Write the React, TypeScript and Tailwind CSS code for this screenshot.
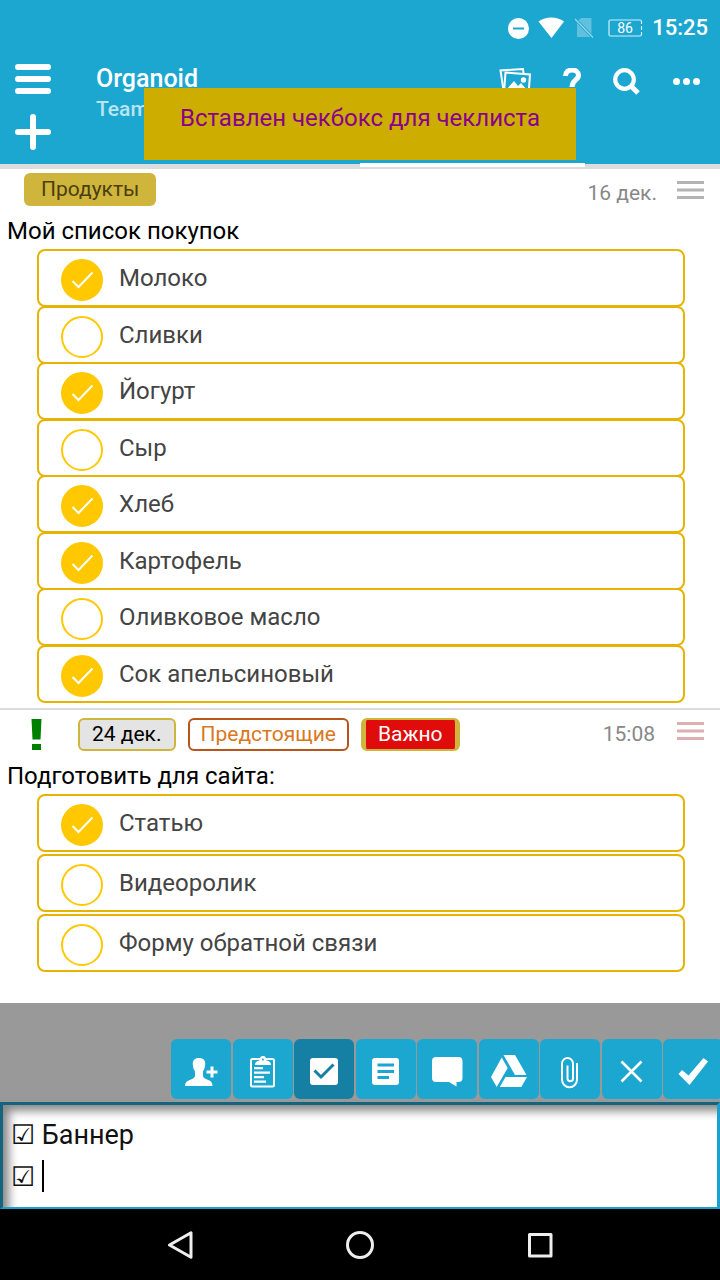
import React, { useState } from 'react'

type Item = { id: number; text: string; done: boolean }

const groceries: Item[] = [
  { id: 1, text: 'Молоко', done: true },
  { id: 2, text: 'Сливки', done: false },
  { id: 3, text: 'Йогурт', done: true },
  { id: 4, text: 'Сыр', done: false },
  { id: 5, text: 'Хлеб', done: true },
  { id: 6, text: 'Картофель', done: true },
  { id: 7, text: 'Оливковое масло', done: false },
  { id: 8, text: 'Сок апельсиновый', done: true },
]

const siteTasks: Item[] = [
  { id: 11, text: 'Статью', done: true },
  { id: 12, text: 'Видеоролик', done: false },
  { id: 13, text: 'Форму обратной связи', done: false },
]

const tools = [
  {
    label: 'Добавить участника',
    icon: (
      <g fill="#fff">
        <path d="M28 19c4.500 0 6.500 2.500 6.200 6.500-.2 3-1 5.200-2.200 7v4.300c0 1.700 1.500 2.700 4 3.700 3.500 1.300 5.500 2.500 5.500 6.500H14c0-4 2.500-5.200 6-6.500 2.500-1 4-2 4-3.700v-4.300c-1.200-1.800-2-4-2.200-7C21.500 21.500 23.500 19 28 19z" />
        <path d="M39.500 27.500h3v4h4v3h-4v4h-3v-4h-4v-3h4z" />
      </g>
    ),
  },
  {
    label: 'Шаблон',
    icon: (
      <g fill="none" stroke="#fff">
        <rect x="18" y="20" width="23" height="27.500" rx="1.500" strokeWidth="2" />
        <path d="M22 26c0-3 2-4 4.500-4.500 0-2.500 1-4.500 3.500-4.500s3.500 2 3.500 4.500C36 22 38 23 38 26z" fill="#fff" stroke="none" />
        <circle cx="30" cy="20.500" r="1" fill="#1ca7d1" stroke="none" />
        <path d="M21 29.200h9M21 33.700h16M21 38.200h10M21 42.700h12" strokeWidth="2.200" />
      </g>
    ),
  },
  {
    label: 'Чекбокс',
    active: true,
    icon: (
      <>
        <rect x="16" y="19" width="28" height="27" rx="3" fill="#fff" />
        <path d="M20.500 31.500l6.500 6.500 12.500-12.500" fill="none" stroke="#1580a3" strokeWidth="3" />
      </>
    ),
  },
  {
    label: 'Заметка',
    icon: (
      <>
        <rect x="16" y="19" width="27" height="27" rx="3" fill="#fff" />
        <path d="M21.500 26H38M21.500 32.500H38M21.500 38.500H33" stroke="#1ca7d1" strokeWidth="3" />
      </>
    ),
  },
  {
    label: 'Комментарий',
    icon: <path d="M19 18h22.500a4 4 0 0 1 4 4v17a4 4 0 0 1-4 4H39.500v4.500L32 43H19a4 4 0 0 1-4-4V22a4 4 0 0 1 4-4z" fill="#fff" />,
  },
  {
    label: 'Google Диск',
    icon: (
      <g fill="#fff">
        <path d="M24.500 16H36l11.500 20H36z" />
        <path d="M22.700 18.500l6 10.500L17.700 48 12 38z" />
        <path d="M26.500 38H48l-5.700 10H20.800z" />
      </g>
    ),
  },
  {
    label: 'Прикрепить файл',
    icon: (
      <path
        d="M37 24v16.500a7.500 7.800 0 0 1-15 0V24.500a5.500 5.500 0 0 1 11 0V39.500a2.750 2.750 0 0 1-5.500 0V26.500"
        fill="none"
        stroke="#fff"
        strokeWidth="2"
      />
    ),
  },
  {
    label: 'Отмена',
    icon: <path d="M19.500 22.500l20 20M39.500 22.500l-20 20" stroke="#fff" strokeWidth="2.600" />,
  },
  {
    label: 'Сохранить',
    icon: <path d="M15.500 35l3.500-4 6.500 5.500L40.500 19l4.500 3.500L26.500 46z" fill="#fff" />,
  },
]

const CheckRow = ({ item, className }: { item: Item; className?: string }) => {
  const [checked, setChecked] = useState(item.done)
  return (
    <li className={className}>
      <label className="flex items-start gap-4 rounded-lg border-2 border-[#e6b400] bg-white pt-2 pb-1 pl-[22px]">
        <span className="grid shrink-0">
          <input
            type="checkbox"
            checked={checked}
            onChange={() => setChecked(!checked)}
            className="col-start-1 row-start-1 size-[42px] appearance-none rounded-full border-2 border-[#ffc800] checked:bg-[#ffc800]"
          />
          {checked && (
            <svg className="pointer-events-none col-start-1 row-start-1 size-[42px]" viewBox="0 0 42 42" fill="none">
              <path d="M11.500 22l6 6L31.500 13.500" stroke="#fff" strokeWidth="2" />
            </svg>
          )}
        </span>
        <span className="text-2xl leading-[38px] text-[#444]">{item.text}</span>
      </label>
    </li>
  )
}

const NoteMenu = ({ className }: { className: string }) => (
  <button type="button" aria-label="Меню заметки" className={className}>
    <svg className="h-[18px] w-[27px]" viewBox="0 0 27 18" stroke="currentColor" strokeWidth="3">
      <path d="M0 1.500h27M0 9h27M0 16.500h27" />
    </svg>
  </button>
)

const StatusBar = () => (
  <div className="flex h-14 items-center justify-end pr-3 text-white">
    <svg className="h-6 w-[138px]" viewBox="0 0 138 24">
      <circle cx="10.500" cy="12.500" r="10.500" fill="#fff" />
      <path d="M5 12.500h11" stroke="#1ca7d1" strokeWidth="2" />
      <path d="M30.500 5.500C38 .2 48.500 .2 56 5.500L43.500 22z" fill="#fff" />
      <path d="M73 2h10.500v19h-14.500V6z" fill="#fff" opacity=".3" />
      <path d="M67 3l18 18.500" stroke="#1ca7d1" strokeWidth="3" />
      <path d="M67 3l18 18.500" stroke="#fff" strokeWidth="1.200" opacity=".55" />
      <path d="M133.500 8V5.500a1.500 1.500 0 0 0-1.500-1.500h-29.500a1.500 1.500 0 0 0-1.500 1.500v13a1.500 1.500 0 0 0 1.500 1.500H132a1.500 1.500 0 0 0 1.500-1.500V16M133.500 10v4" fill="none" stroke="#fff" strokeWidth="1.200" opacity=".8" />
      <text x="117" y="17" textAnchor="middle" fill="#fff" fontSize="14" fontFamily="Roboto, sans-serif">86</text>
    </svg>
    <span className="ml-1.5 text-[22px] leading-6 font-medium">15:25</span>
  </div>
)

export default function App() {
  const [draft, setDraft] = useState('☑ Баннер\n☑ ')

  return (
    <div className="relative flex min-h-screen flex-col overflow-hidden bg-white font-[Roboto,sans-serif]">
      <header className="border-b-[5px] border-[#dcdcdc] bg-[#1ca7d1]">
        <StatusBar />
        <div className="flex pt-2 pl-[15px] text-white">
          <div className="flex flex-col gap-5">
            <button type="button" aria-label="Меню">
              <svg className="h-[30px] w-9" viewBox="0 0 36 30" stroke="#fff" strokeWidth="6" strokeLinecap="round">
                <path d="M3 3h30M3 15h30M3 27h30" />
              </svg>
            </button>
            <button type="button" aria-label="Добавить">
              <svg className="size-9" viewBox="0 0 36 36" stroke="#fff" strokeWidth="6" strokeLinecap="round">
                <path d="M3 18h30M18 3v30" />
              </svg>
            </button>
          </div>
          <div className="ml-[45px] flex-1">
            <h1 className="text-[25px] leading-[30px] font-medium">Organoid</h1>
            <p className="text-[21px] leading-[30px] font-medium opacity-70">Team</p>
          </div>
          <div className="flex items-start gap-8 pt-1 pr-5">
            <button type="button" aria-label="Галерея">
              <svg className="h-7 w-8" viewBox="0 0 32 28" fill="none">
                <path d="M4.500 22L1.500 2.500 24 1l.5 4" stroke="#fff" strokeWidth="2" />
                <path d="M6.500 4.500l24.500 2-1.500 20-24.500-1.500z" stroke="#fff" strokeWidth="2" />
                <path d="M8 21l7-8 4 5 3-3 6 7v3L7 24z" fill="#fff" />
                <circle cx="24.500" cy="12" r="2.700" fill="#fff" />
              </svg>
            </button>
            <button type="button" aria-label="Помощь">
              <svg className="h-7 w-[18px]" viewBox="0 0 18 28" fill="none">
                <path d="M2.500 8c0-4 2.800-6 6.500-6s6.500 2 6.500 5.200c0 5-6.500 4.800-6.500 11.800" stroke="#fff" strokeWidth="5" />
                <path d="M6.500 22h5v5h-5z" fill="#fff" />
              </svg>
            </button>
            <button type="button" aria-label="Поиск">
              <svg className="size-7" viewBox="0 0 28 28" fill="none" stroke="#fff">
                <circle cx="11.500" cy="11.500" r="9.300" strokeWidth="4.200" />
                <path d="M17.500 17.500l7.500 7.500" strokeWidth="5" />
              </svg>
            </button>
            <button type="button" aria-label="Ещё">
              <svg className="h-7 w-[27px]" viewBox="0 0 27 28" fill="#fff">
                <circle cx="3.500" cy="13.500" r="3.500" />
                <circle cx="13.500" cy="13.500" r="3.500" />
                <circle cx="23.500" cy="13.500" r="3.500" />
              </svg>
            </button>
          </div>
        </div>
        {/* active tab line, hangs over the bottom border */}
        <div className="mt-[13px] -mb-[3px] ml-[50%] h-1 w-[225px] bg-white" />
      </header>

      <div role="status" className="absolute top-[88px] left-1/5 h-[72px] w-3/5 bg-[#ccad00] pt-3 text-center text-2xl leading-9 text-[#8b008b]">
        Вставлен чекбокс для чеклиста
      </div>

      <main className="flex-1">
        <article className="pb-[5px]">
          <div className="flex items-start pt-1 pr-4 pl-6">
            <span className="rounded-md bg-[#cfb53b] px-[17px] text-[21px] leading-[33px] text-[#4b3e10]">Продукты</span>
            <time className="ml-auto pt-1 text-[21px] leading-8 text-[#888]">16 дек.</time>
            <NoteMenu className="ml-5 pt-2 text-[#b4b4b4]" />
          </div>
          <h2 className="mt-1 pl-[7px] text-2xl leading-9 text-black">Мой список покупок</h2>
          <ul className="pr-[35px] pl-[37px]">
            {groceries.map((item) => (
              <CheckRow key={item.id} item={item} className="not-first:odd:-mt-0.5 even:-mt-px" />
            ))}
          </ul>
        </article>

        <article className="border-t-2 border-[#dcdcdc] pb-7">
          <div className="flex items-start pt-2 pr-4 pl-[31px]">
            <svg className="h-[33px] w-[11px]" viewBox="0 0 11 33" fill="#008000">
              <path d="M.5 1h10l-1 20.500h-8zM1 26h9v6H1z" />
            </svg>
            <div className="ml-9 flex gap-3 text-[21px] leading-[29px]">
              <span className="rounded-md border-2 border-[#cfb53b] bg-[#e4e4e4] px-3 text-black">24 дек.</span>
              <span className="rounded-md border-2 border-[#b8541c] px-[11px] text-[#d97820]">Предстоящие</span>
              <span className="rounded-md border-x-[5px] border-y-2 border-[#cfb53b] bg-[#e00b0b] px-3 text-white">Важно</span>
            </div>
            <time className="ml-auto text-[21px] leading-[33px] text-[#888]">15:08</time>
            <NoteMenu className="ml-[22px] pt-1 text-[#dcb0b0]" />
          </div>
          <h2 className="mt-[7px] pl-[7px] text-2xl leading-9 text-black">Подготовить для сайта:</h2>
          <ul className="flex flex-col gap-0.5 pr-[35px] pl-[37px]">
            {siteTasks.map((item) => (
              <CheckRow key={item.id} item={item} />
            ))}
          </ul>
        </article>
      </main>

      <footer>
        <div className="overflow-hidden bg-[#999] pt-9 pb-[3px]">
          <div className="-mr-[5px] flex justify-end">
            {tools.map((tool) => (
              <button
                key={tool.label}
                type="button"
                aria-label={tool.label}
                className={`size-[60px] shrink-0 rounded-md odd:mr-0.5 even:mr-px ${tool.active ? 'bg-[#1580a3]' : 'bg-[#1ca7d1]'}`}
              >
                <svg viewBox="0 0 60 60">{tool.icon}</svg>
              </button>
            ))}
          </div>
        </div>
        <div className="relative">
          <textarea
            aria-label="Текст заметки"
            rows={2}
            value={draft}
            onChange={(e) => setDraft(e.target.value)}
            className="block w-full resize-none border-[3px] border-b-2 border-t-[#12647f] border-r-[#1ba1d1] border-b-[#1ba1d1] border-l-[#12647f] bg-white py-[9px] pl-2 text-[27px] leading-[42px] text-[#111] caret-transparent inset-shadow-[8px_8px_10px_-2px_#888] outline-none"
          />
          <span className="pointer-events-none absolute bottom-[17px] left-[42px] h-8 w-0.5 bg-black" />
        </div>
        <nav className="flex items-center justify-around bg-black px-[90px] pt-[22px] pb-[21px]">
          <button type="button" aria-label="Назад">
            <svg className="size-7" viewBox="0 0 28 28" fill="none" stroke="#eee" strokeWidth="3" strokeLinejoin="round">
              <path d="M3.500 14L25 1.800v24.400z" />
            </svg>
          </button>
          <button type="button" aria-label="Домой">
            <svg className="size-7" viewBox="0 0 28 28" fill="none" stroke="#eee" strokeWidth="3">
              <circle cx="14" cy="14" r="12.500" />
            </svg>
          </button>
          <button type="button" aria-label="Недавние">
            <svg className="size-7" viewBox="0 0 28 28" fill="none" stroke="#eee" strokeWidth="3" strokeLinejoin="round">
              <path d="M3.500 3.500h21.500v21.500H3.500z" />
            </svg>
          </button>
        </nav>
      </footer>
    </div>
  )
}
